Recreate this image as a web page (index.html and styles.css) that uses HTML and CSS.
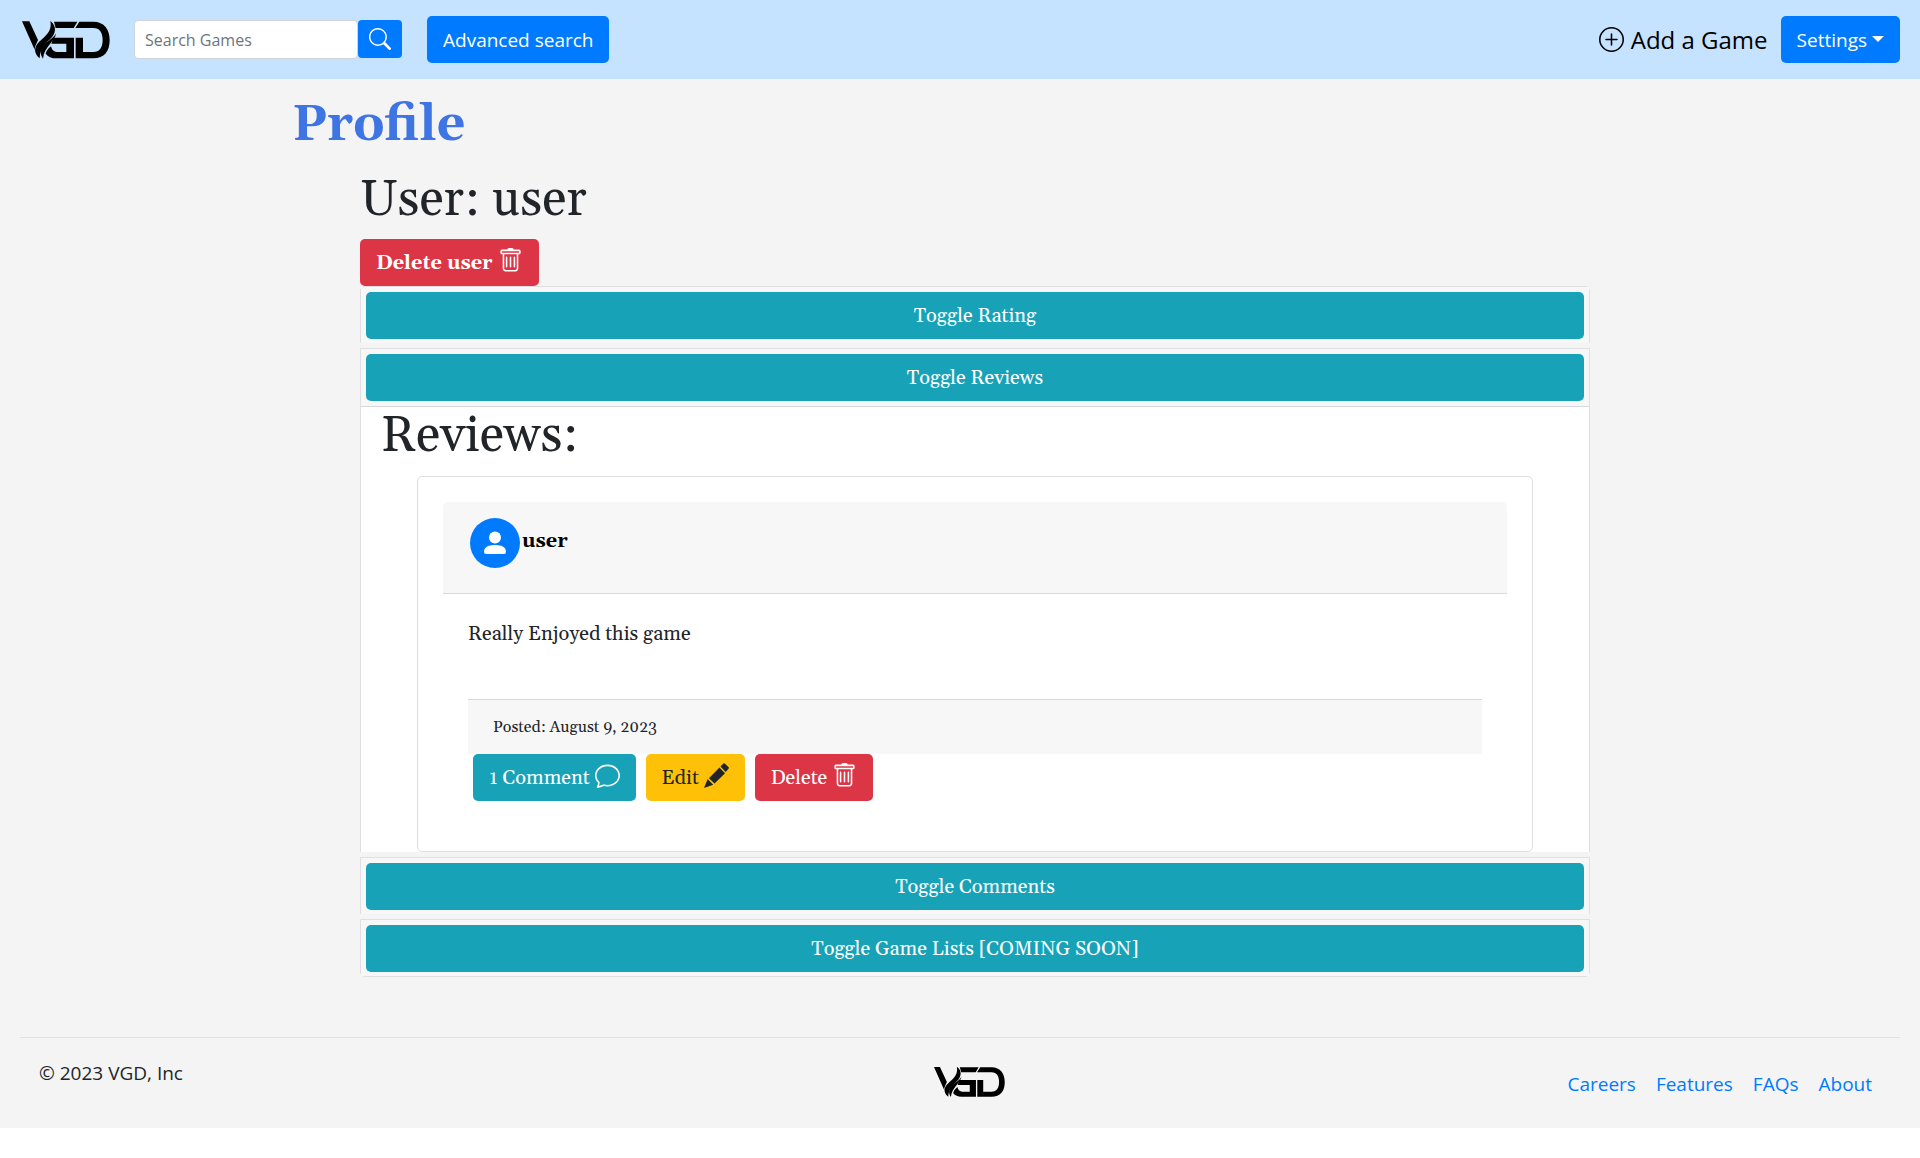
FILE: index.html
```html
<!DOCTYPE html>
<html lang="en">
<head>
<meta charset="utf-8">
<title>Profile</title>
<link rel="stylesheet" href="styles.css">
</head>
<body>
<svg class="defs" aria-hidden="true">
  <symbol id="logo" viewBox="36 30 264 112">
    <path d="M36 30H58L84 86L76 104Q72 112 76 120Z"/>
    <path d="M121 29C141 44 139 66 120 84C101 101 90 116 89 141C74 129 71 112 82 98C98 78 128 66 121 29Z"/>
    <path d="M138 66C136 90 102 106 99 142C88 128 91 110 104 98C116 87 131 81 138 66Z"/>
    <path d="M132 31H202L191 50H137Z"/>
    <path d="M130 79H192V141H138Q118 141 107 127Q109 116 123 105Q127 122 141 122H169V97H124Z"/>
    <path d="M208 31H250C283 31 299 55 299 86C299 120 283 141 250 141H197V79H219V122H250C269 122 278 108 278 86C278 64 269 50 250 50H196Z"/>
  </symbol>
  <symbol id="trash" viewBox="0 0 16 16">
    <path d="M5.500 5.500A.5.5 0 0 1 6 6v6a.5.5 0 0 1-1 0V6a.5.5 0 0 1 .5-.5zm2.500 0a.5.5 0 0 1 .5.5v6a.5.5 0 0 1-1 0V6a.5.5 0 0 1 .5-.5zm3 .5a.5.5 0 0 0-1 0v6a.5.5 0 0 0 1 0V6z"/>
    <path fill-rule="evenodd" d="M14.500 3a1 1 0 0 1-1 1H13v9a2 2 0 0 1-2 2H5a2 2 0 0 1-2-2V4h-.5a1 1 0 0 1-1-1V2a1 1 0 0 1 1-1H6a1 1 0 0 1 1-1h2a1 1 0 0 1 1 1h3.500a1 1 0 0 1 1 1v1zM4.118 4 4 4.059V13a1 1 0 0 0 1 1h6a1 1 0 0 0 1-1V4.059L11.882 4H4.118zM2.500 3V2h11v1h-11z"/>
  </symbol>
</svg>

<header class="navbar">
  <a class="brand" href="#" aria-label="VGD home"><svg class="brand-logo"><use href="#logo"/></svg></a>
  <form class="search">
    <input class="search-input" type="text" placeholder="Search Games" aria-label="Search Games">
    <button class="search-btn" type="button" aria-label="Search">
      <svg class="icon-search" viewBox="0 0 16 16"><path d="M11.742 10.344a6.500 6.500 0 1 0-1.397 1.398h-.001c.03.04.062.078.098.115l3.850 3.850a1 1 0 0 0 1.415-1.414l-3.850-3.850a1.007 1.007 0 0 0-.115-.1zM12 6.500a5.500 5.500 0 1 1-11 0 5.500 5.500 0 0 1 11 0z"/></svg>
    </button>
  </form>
  <button class="btn primary sans" type="button">Advanced search</button>
  <a class="add-game" href="#">
    <svg class="icon" viewBox="0 0 16 16"><path d="M8 15A7 7 0 1 1 8 1a7 7 0 0 1 0 14zm0 1A8 8 0 1 0 8 0a8 8 0 0 0 0 16z"/><path d="M8 4a.5.5 0 0 1 .5.5v3h3a.5.5 0 0 1 0 1h-3v3a.5.5 0 0 1-1 0v-3h-3a.5.5 0 0 1 0-1h3v-3A.5.5 0 0 1 8 4z"/></svg>
    Add a Game
  </a>
  <button class="btn primary sans settings" type="button">Settings<span class="caret"></span></button>
</header>

<div class="page">
  <h1 class="page-title">Profile</h1>
  <main class="content">
    <h2 class="heading">User: user</h2>
    <button class="btn danger strong" type="button">Delete user <svg class="icon"><use href="#trash"/></svg></button>

    <div class="accordion">
      <section class="panel">
        <div class="panel-head"><button class="btn info block" type="button">Toggle Rating</button></div>
      </section>
      <section class="panel">
        <div class="panel-head open"><button class="btn info block" type="button">Toggle Reviews</button></div>
        <div class="panel-body">
          <h2 class="heading">Reviews:</h2>
          <article class="review">
            <div class="review-head">
              <svg class="avatar" viewBox="0 0 50 50"><circle class="avatar-bg" cx="25" cy="25" r="25"/><circle class="avatar-fg" cx="25" cy="19.500" r="6"/><path class="avatar-fg" d="M14 33.500C14 29 19 27 25 27S36 29 36 33.500Q36 36 34 36H16Q14 36 14 33.500Z"/></svg>
              <a class="author" href="#">user</a>
            </div>
            <div class="review-body">
              <p class="review-text">Really Enjoyed this game</p>
              <div class="review-meta">Posted: August 9, 2023</div>
              <div class="actions">
                <button class="btn info" type="button">1 Comment <svg class="icon" viewBox="0 0 16 16"><path d="M2.678 11.894a1 1 0 0 1 .287.801 10.970 10.970 0 0 1-.398 2c1.395-.323 2.247-.697 2.634-.893a1 1 0 0 1 .71-.074A8.060 8.060 0 0 0 8 14c3.996 0 7-2.807 7-6 0-3.192-3.004-6-7-6S1 4.808 1 8c0 1.468.617 2.830 1.678 3.894zm-.493 3.905a21.682 21.682 0 0 1-.713.129c-.2.032-.352-.176-.273-.362a9.680 9.680 0 0 0 .244-.637l.003-.01c.248-.72.45-1.548.524-2.319C.743 11.370 0 9.760 0 8c0-3.866 3.582-7 8-7s8 3.134 8 7-3.582 7-8 7a9.060 9.060 0 0 1-2.347-.306c-.52.263-1.639.742-3.468 1.105z"/></svg></button>
                <button class="btn warning" type="button">Edit <svg class="icon" viewBox="0 0 76 76"><path d="M0 76L11 49L28 66ZM15 46L47 14L64 31L32 62ZM50 11L60 1Q62 0 64 2L75 13Q77 15 75 17L66 27Z"/></svg></button>
                <button class="btn danger" type="button">Delete <svg class="icon"><use href="#trash"/></svg></button>
              </div>
            </div>
          </article>
        </div>
      </section>
      <section class="panel">
        <div class="panel-head"><button class="btn info block" type="button">Toggle Comments</button></div>
      </section>
      <section class="panel">
        <div class="panel-head"><button class="btn info block" type="button">Toggle Game Lists [COMING SOON]</button></div>
      </section>
    </div>
  </main>

  <footer class="footer">
    <p class="copyright">© 2023 VGD, Inc</p>
    <svg class="footer-logo"><use href="#logo"/></svg>
    <nav class="footer-nav">
      <a href="#">Careers</a>
      <a href="#">Features</a>
      <a href="#">FAQs</a>
      <a href="#">About</a>
    </nav>
  </footer>
</div>
</body>
</html>
```
FILE: styles.css
```css
* { box-sizing: border-box; }

body {
  margin: 0;
  background: #fff;
  color: #212529;
  font-family: Georgia, Gelasio, "Liberation Serif", serif;
  font-size: 20px;
  line-height: 30px;
}

h1, h2, p { margin: 0; }
a { text-decoration: none; }
svg { fill: currentColor; }
.defs { display: none; }

.navbar {
  display: flex;
  align-items: center;
  padding: 16px 20px;
  background: #c5e2ff;
  font-family: "Segoe UI", "Open Sans", sans-serif;
}
.brand { display: flex; padding-left: 2px; margin-right: 24px; color: #000; }
.brand-logo { width: 88px; height: 38px; }
.search { display: flex; margin-right: 25px; }
.search-input {
  width: 224px;
  height: 39px;
  padding: 0 10px;
  border: 1px solid #ced4da;
  border-radius: 4px;
  font-family: inherit;
  font-size: 16px;
}
.search-input::placeholder { color: #6c757d; opacity: 1; }
.search-btn {
  width: 44px;
  height: 38px;
  padding: 0;
  border: 0;
  border-radius: 4px;
  background: #007bff;
  color: #fff;
}
.icon-search { display: block; width: 22px; height: 22px; margin: 0 auto; }
.add-game {
  display: flex;
  align-items: center;
  gap: 7px;
  margin-left: auto;
  margin-right: 13px;
  color: #000;
  font-size: 24px;
}

.btn {
  height: 47px;
  padding: 0 16px;
  border: 0;
  border-radius: 5px;
  color: #fff;
  font-family: inherit;
  font-size: 20px;
  line-height: 30px;
  white-space: nowrap;
}
.sans { font-size: 19px; }
.primary { background: #007bff; }
.danger { background: #dc3545; }
.info { background: #17a2b8; }
.warning { background: #ffc107; color: #212529; }
.strong { font-weight: 700; }
.block { display: block; width: 100%; }
.icon { width: 25px; height: 25px; }
.btn .icon { vertical-align: -4px; }
.caret {
  display: inline-block;
  margin-left: 5px;
  border: 6px solid transparent;
  border-top-color: #fff;
  border-bottom: 0;
  vertical-align: 5px;
}

.page { padding: 17px 20px 0; background: #f4f4f4; }
.page-title {
  max-width: 1336px;
  margin: 0 auto;
  color: #3f74e3;
  font-size: 50px;
  line-height: 60px;
}
.content { max-width: 1260px; margin: 0 auto; padding: 15px 0 60px 30px; }
.heading { font-size: 50px; font-weight: 400; line-height: 60px; }
.content > .heading { margin-bottom: 8px; }
.content > .btn { display: block; }

.panel { border: 1px solid #dfdfdf; border-bottom: 0; }
.panel:first-child { border-radius: 5px 5px 0 0; }
.panel:last-child { border-bottom: 1px solid #dfdfdf; border-radius: 0 0 5px 5px; }
.panel + .panel { margin-top: 5px; }
.panel-head { padding: 5px 5px 4px; background: #f7f7f7; }
.open { padding-bottom: 5px; border-bottom: 1px solid #d8d8d8; }
.panel-body { padding: 0 56px; background: #fff; }
.panel-body > .heading { margin: 0 -36px; padding-bottom: 9px; }

.review { padding: 25px; border: 1px solid #dfdfdf; border-radius: 5px; }
.review-head {
  display: flex;
  align-items: flex-start;
  gap: 2px;
  min-height: 92px;
  padding: 16px 27px 0;
  border-bottom: 1px solid #d8d8d8;
  border-radius: 5px 5px 0 0;
  background: #f7f7f7;
}
.avatar { width: 50px; height: 50px; }
.avatar-bg { fill: #007bff; }
.avatar-fg { fill: #fff; }
.author { padding-top: 8px; color: #000; font-weight: 700; }
.review-body { padding: 25px; }
.review-text { padding-bottom: 50px; }
.review-meta {
  padding: 12px 25px;
  border-top: 1px solid #d8d8d8;
  background: #f7f7f7;
  font-size: 16px;
}
.actions { display: flex; gap: 10px; padding: 0 5px; }

.footer {
  display: grid;
  grid-template-columns: 1fr auto 1fr;
  align-items: start;
  padding: 20px 0 27px 19px;
  border-top: 1px solid #dee2e6;
  font-family: "Segoe UI", "Open Sans", sans-serif;
  font-size: 19px;
}
.footer-logo { width: 71px; height: 34px; margin-top: 7px; color: #000; }
.footer-nav { display: flex; justify-content: flex-end; gap: 20px; padding: 11px 28px 2px 0; }
.footer-nav a { color: #007bff; }
```
